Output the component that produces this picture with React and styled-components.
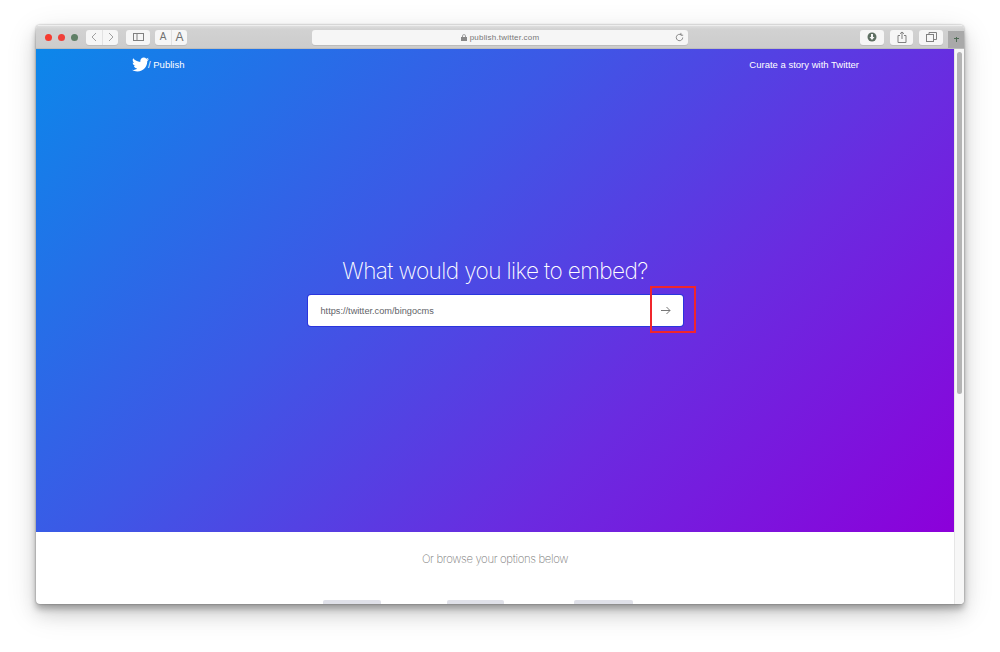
import React from 'react';
import styled, { createGlobalStyle } from 'styled-components';
import { FaTwitter } from 'react-icons/fa';

const Global = createGlobalStyle`
  html, body { margin: 0; padding: 0; background: #fff; overflow: hidden; }
  #root { width: 1000px; height: 652px; }
  * { box-sizing: border-box; }
`;

const Stage = styled.div`
  position: relative;
  width: 1000px;
  height: 652px;
  padding: 25px 36px 48px;
  background: #fff;
  font-family: "Liberation Sans", Arial, sans-serif;
`;

const BrowserWindow = styled.div`
  width: 928px;
  height: 579px;
  display: flex;
  flex-direction: column;
  background: #fff;
  border-radius: 4px;
  overflow: hidden;
  box-shadow: 0 0 2px rgba(0,0,0,0.4), 0 5px 6px rgba(0,0,0,0.26), 0 10px 18px rgba(0,0,0,0.12), 0 8px 32px rgba(0,0,0,0.12);
`;

const Toolbar = styled.div`
  height: 24px;
  flex: none;
  display: flex;
  align-items: center;
  padding: 0 0 0 9px;
  background: linear-gradient(#dedede, #d2d2d2 15%, #cccccc);
  border-top: 1px solid #eeeeee;
  border-bottom: 1px solid #bcbcbc;
`;

const Light = styled.span`
  width: 7px;
  height: 7px;
  border-radius: 50%;
  background: ${p => p.$c};
  margin-right: 6px;
  flex: none;
`;

const Group = styled.div`
  display: flex;
  height: 15px;
  margin-left: ${p => p.$ml || 0}px;
  background: #f6f6f6;
  border-radius: 3px;
  box-shadow: 0 1px 0 #bcbcbc;
  flex: none;
`;

const Tool = styled.div`
  width: ${p => p.$w}px;
  display: flex;
  align-items: center;
  justify-content: center;
  color: #707070;
  font-size: ${p => p.$fs || 10}px;
  line-height: 1;
  & + & { border-left: 1px solid #e2e2e2; }
`;

const UrlBar = styled.div`
  position: relative;
  flex: none;
  width: 376px;
  height: 15px;
  margin-left: 125px;
  display: flex;
  align-items: center;
  justify-content: center;
  gap: 3px;
  background: #f6f6f6;
  border-radius: 3px;
  box-shadow: 0 1px 0 #bcbcbc;
  font-size: 8px;
  letter-spacing: 0.2px;
  color: #777;
`;

const Reload = styled.svg`
  position: absolute;
  right: 3px;
  top: 2px;
`;

const Corner = styled.div`
  width: 16px;
  height: 17px;
  margin-left: auto;
  align-self: flex-end;
  background: #a9a9a9;
  display: flex;
  align-items: center;
  justify-content: center;
`;

const Body = styled.div`
  flex: 1;
  display: flex;
  min-height: 0;
`;

const Content = styled.div`
  width: 918px;
  display: flex;
  flex-direction: column;
`;

const Hero = styled.div`
  height: 483px;
  flex: none;
  display: flex;
  flex-direction: column;
  color: #fff;
  background: linear-gradient(135deg, #0c87ea 0%, #3d58e6 38%, #6a2be0 68%, #8c00da 100%);
`;

const Nav = styled.div`
  display: flex;
  align-items: center;
  justify-content: space-between;
  height: 31px;
  padding: 0 95px;
  font-size: 9.5px;
`;

const Brand = styled.div`
  display: flex;
  align-items: center;
  gap: 0;
  margin-left: 1px;
`;

const BrandText = styled.span`
  margin-left: -1px;
`;

const NavLink = styled.div`
  letter-spacing: 0;
`;

const Centre = styled.div`
  display: flex;
  flex-direction: column;
  align-items: center;
  padding-top: 177px;
`;

const Title = styled.h1`
  margin: 0;
  font-family: Inter, sans-serif;
  font-weight: 200;
  font-size: 22.6px;
  letter-spacing: -0.6px;
  line-height: 28px;
  text-align: center;
`;

const Search = styled.div`
  width: 375px;
  height: 31px;
  margin-top: 10px;
  display: flex;
  align-items: center;
  justify-content: space-between;
  padding: 0 12px 0 13px;
  background: #fff;
  border-radius: 3px;
  box-shadow: 0 0 0 1px #2a35dd;
  color: #5f6368;
  font-size: 9.2px;
`;

const Lower = styled.div`
  flex: 1;
  position: relative;
  overflow: hidden;
  display: flex;
  flex-direction: column;
  align-items: center;
`;

const Browse = styled.div`
  margin-top: 20px;
  font-family: Inter, sans-serif;
  font-weight: 200;
  font-size: 11.3px;
  letter-spacing: -0.33px;
  line-height: 14px;
  color: #777;
`;

const Cards = styled.div`
  position: absolute;
  left: 287px;
  bottom: 0;
  display: flex;
`;

const CardTop = styled.div`
  width: ${p => p.$w}px;
  margin-right: ${p => p.$mr || 0}px;
  height: 4px;
  background: #dfe0e8;
  border-radius: 2px 2px 0 0;
`;

const Gutter = styled.div`
  width: 10px;
  flex: none;
  background: #f7f7f7;
  border-left: 1px solid #e6e6e6;
  padding: 3px 2px 0;
`;

const Thumb = styled.div`
  height: 342px;
  background: #b4b4b4;
  border-radius: 3px;
`;

const Annotation = styled.div`
  position: absolute;
  left: 650px;
  top: 286px;
  width: 46px;
  height: 47px;
  border: 2px solid #f0262c;
`;

export default function App() {
  return (
    <Stage>
      <Global />
      <BrowserWindow>
        <Toolbar>
          <Light $c="#f63b2f" />
          <Light $c="#f0403a" />
          <Light $c="#5f7f66" />
          <Group $ml={2}>
            <Tool $w={16}>
              <svg width="6" height="10" viewBox="0 0 6 10" fill="none" stroke="#a0a0a0" strokeWidth="1"><path d="M5 1 1 5l4 4" /></svg>
            </Tool>
            <Tool $w={16}>
              <svg width="6" height="10" viewBox="0 0 6 10" fill="none" stroke="#a0a0a0" strokeWidth="1"><path d="m1 1 4 4-4 4" /></svg>
            </Tool>
          </Group>
          <Group $ml={8}>
            <Tool $w={24}>
              <svg width="11" height="8" viewBox="0 0 11 8" fill="none" stroke="#808080" strokeWidth="1"><rect x=".5" y=".5" width="10" height="7" /><path d="M4 .5v7" /></svg>
            </Tool>
          </Group>
          <Group $ml={5}>
            <Tool $w={16} $fs={10}>A</Tool>
            <Tool $w={16} $fs={12}>A</Tool>
          </Group>
          <UrlBar>
            <svg width="6" height="7" viewBox="0 0 6 7" fill="#888"><path d="M1.2 3V2a1.8 1.8 0 0 1 3.6 0v1H6v4H0V3zm.8 0h2V2a1 1 0 0 0-2 0z" /></svg>
            publish.twitter.com
            <Reload width="11" height="11" viewBox="0 0 24 24" fill="none" stroke="#808080" strokeWidth="2"><path d="M19 12a7 7 0 1 1-3-5.700" /><path d="M15 2v5h5" /></Reload>
          </UrlBar>
          <Group $ml={172}>
            <Tool $w={24}>
              <svg width="10" height="10" viewBox="0 0 10 10"><circle cx="5" cy="5" r="4.500" fill="#5e6f62" /><path d="M4 2h2v3h1.500L5 8 2.500 5H4z" fill="#f6f6f6" /></svg>
            </Tool>
          </Group>
          <Group $ml={6}>
            <Tool $w={23}>
              <svg width="10" height="12" viewBox="0 0 10 12" fill="none" stroke="#808080" strokeWidth="1"><path d="M3 4.500H1v7h8v-7H7M5 8V1M3 2.800 5 1l2 1.800" /></svg>
            </Tool>
          </Group>
          <Group $ml={6}>
            <Tool $w={24}>
              <svg width="11" height="10" viewBox="0 0 11 10" fill="none" stroke="#808080" strokeWidth="1"><rect x=".5" y="2.500" width="7" height="7" /><path d="M3 2.500V.5h7.500v7H7.500" /></svg>
            </Tool>
          </Group>
          <Corner>
            <svg width="7" height="7" viewBox="0 0 7 7" fill="none" stroke="#4f6b55" strokeWidth="1"><path d="M1 2.500h5M3.500 1v5" /></svg>
          </Corner>
        </Toolbar>
        <Body>
          <Content>
            <Hero>
              <Nav>
                <Brand>
                  <FaTwitter size={17} color="#fff" />
                  <BrandText>/ Publish</BrandText>
                </Brand>
                <NavLink>Curate a story with Twitter</NavLink>
              </Nav>
              <Centre>
                <Title>What would you like to embed?</Title>
                <Search>
                  <span>https://twitter.com/bingocms</span>
                  <svg width="10" height="9" viewBox="0 0 10 9" fill="none" stroke="#777" strokeWidth="1"><path d="M0 4.500h9M5.500 1 9 4.500 5.500 8" /></svg>
                </Search>
              </Centre>
            </Hero>
            <Lower>
              <Browse>Or browse your options below</Browse>
              <Cards>
                <CardTop $w={58} $mr={66} />
                <CardTop $w={57} $mr={70} />
                <CardTop $w={59} />
              </Cards>
            </Lower>
          </Content>
          <Gutter>
            <Thumb />
          </Gutter>
        </Body>
      </BrowserWindow>
      <Annotation />
    </Stage>
  );
}
